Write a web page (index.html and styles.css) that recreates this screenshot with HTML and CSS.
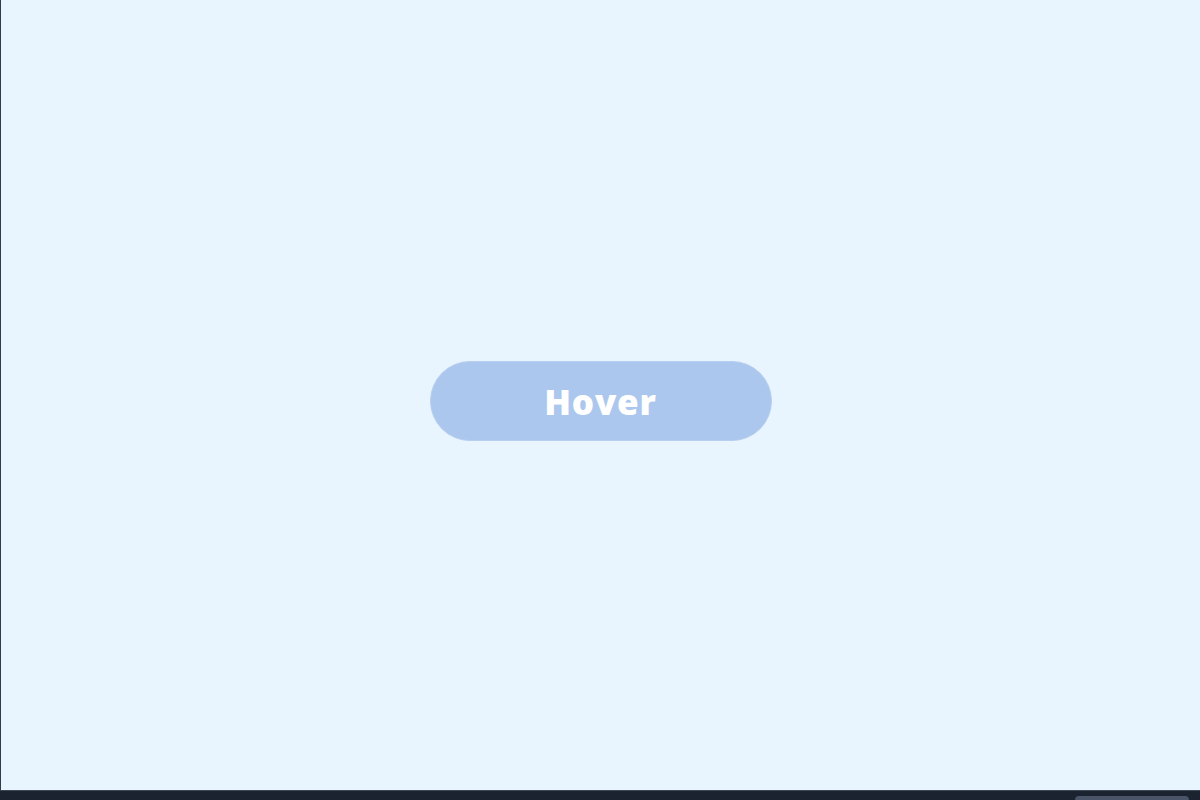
FILE: index.html
```html
<!DOCTYPE html>
<html lang="en">
<head>
  <meta charset="UTF-8">
  <meta name="viewport" content="width=device-width, initial-scale=1.0">
  <title>Hover Button</title>
  <link rel="stylesheet" href="styles.css">
</head>
<body>
  <div class="frame">
    <!-- Stage with the centered pill button -->
    <main class="stage">
      <button class="pill-button">Hover</button>
    </main>
    <!-- Dark strip along the bottom -->
    <footer class="bottom-bar">
      <span class="bar-tab"></span>
    </footer>
  </div>
</body>
</html>
```

FILE: styles.css
```css
html, body {
  margin: 0;
  padding: 0;
  height: 100%;
}

body {
  font-family: "Open Sans", "Liberation Sans", sans-serif;
  background-color: #1b2230;
}

.frame {
  display: flex;
  flex-direction: column;
  height: 100vh;
}

/* Light stage */
.stage {
  flex: 1;
  display: flex;
  align-items: center;
  justify-content: center;
  padding-top: 12px;
  background-color: #e8f4fe;
  border-left: 1px solid #2f3b4e;
  border-bottom: 1px solid #3a4556;
}

.pill-button {
  width: 342px;
  height: 80px;
  border: 1px solid #b7cff0;
  border-radius: 40px;
  background-color: #acc7ed;
  color: #fff;
  font-family: inherit;
  font-size: 35px;
  font-weight: 800;
  letter-spacing: 0.8px;
  cursor: pointer;
}

/* Bottom bar */
.bottom-bar {
  height: 9px;
  display: flex;
  justify-content: flex-end;
  align-items: flex-end;
  padding-right: 11px;
  overflow: hidden;
}

.bar-tab {
  width: 114px;
  height: 4px;
  background-color: #4a5468;
  border-radius: 4px 4px 0 0;
}
```
